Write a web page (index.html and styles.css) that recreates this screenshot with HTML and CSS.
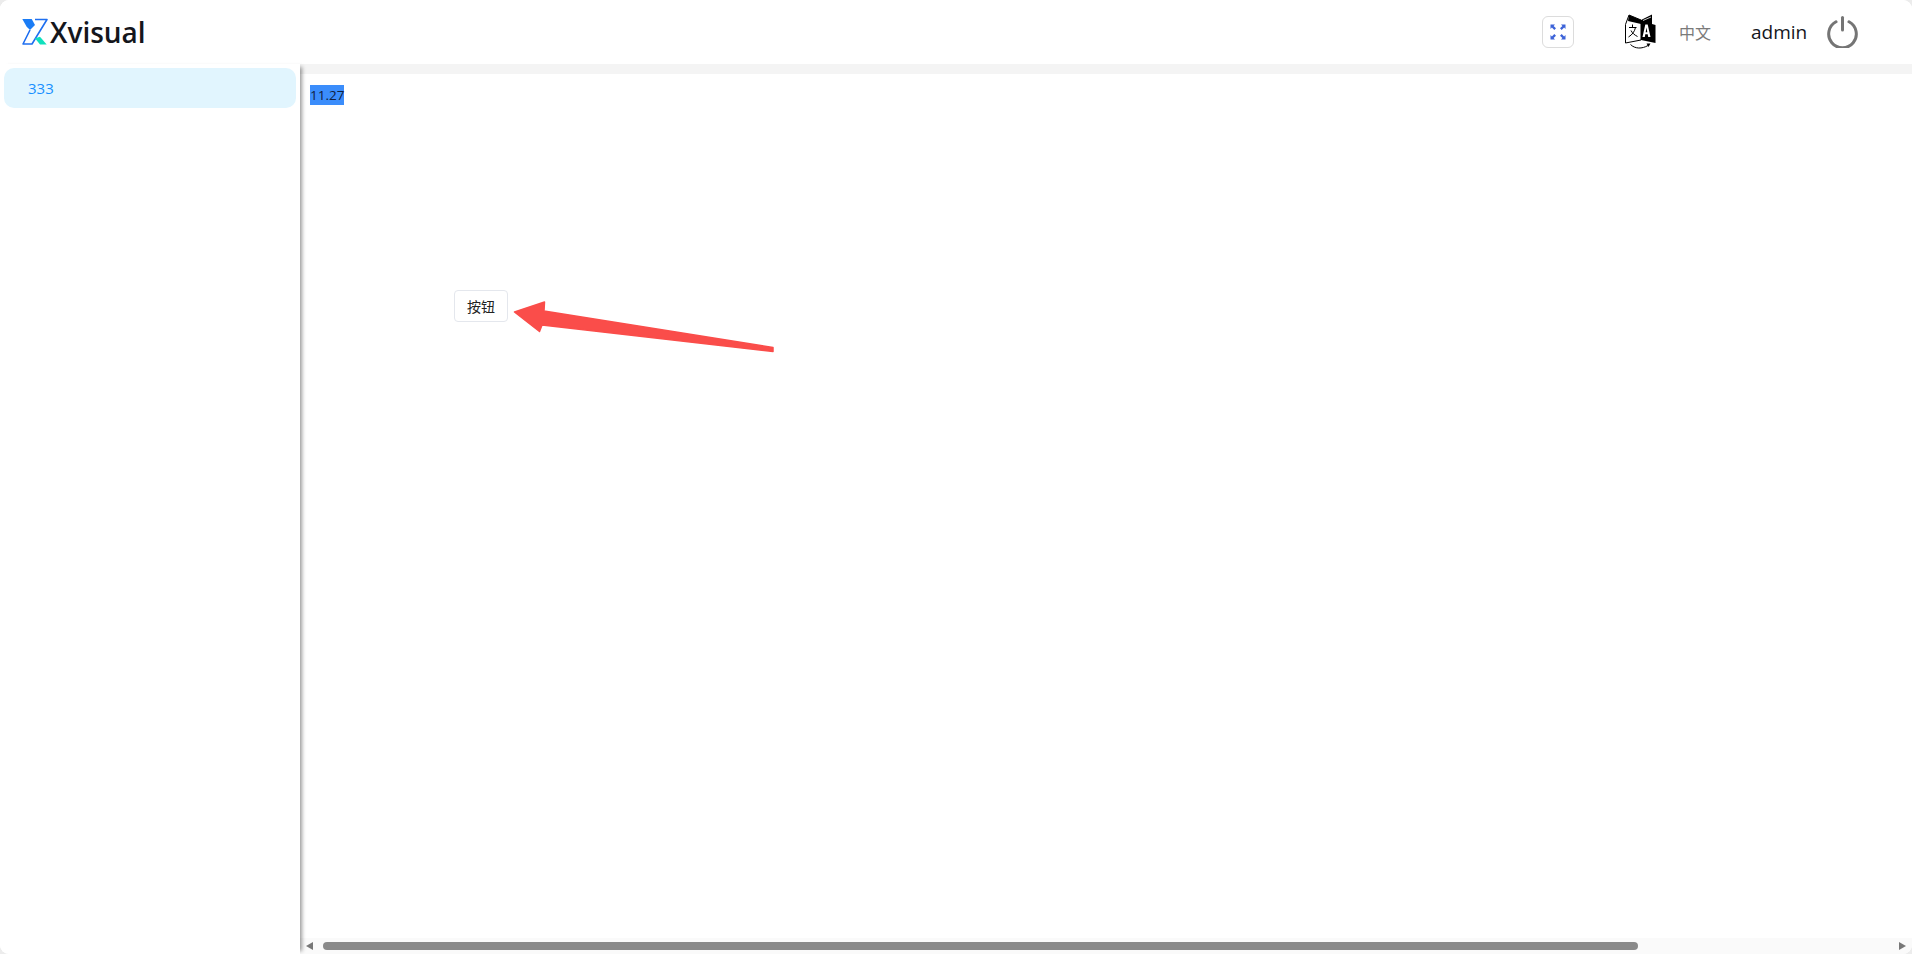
FILE: index.html
```html
<!DOCTYPE html>
<html lang="zh">
<head>
<meta charset="utf-8">
<title>Xvisual</title>
<link rel="stylesheet" href="styles.css">
</head>
<body>
<div class="app">
  <header class="header">
    <div class="brand">
      <svg class="logo" viewBox="0 0 28 28" width="28" height="28" aria-hidden="true">
        <path d="M0.3 1H9.7L13 7L8 12L4.7 8.7Z" fill="#1a7cf5"/>
        <path d="M13 1.5H25L10 26H1L8 12" fill="none" stroke="#1f6ff0" stroke-width="1.6" stroke-linejoin="round"/>
        <path d="M13 20.3L18 18.7L24.7 26.6H18Z" fill="#0fe0bd"/>
      </svg>
      <span class="brand-name">Xvisual</span>
    </div>
    <div class="tools">
      <button class="fullscreen" aria-label="全屏">
        <svg viewBox="0 0 16 16" width="16" height="16" aria-hidden="true">
          <g fill="#3d63d8">
            <path d="M0.5 0.5H5L3.6 1.9L6 4.3L4.3 6L1.9 3.6L0.5 5Z"/>
            <path d="M15.5 0.5H11L12.4 1.9L10 4.3L11.7 6L14.1 3.6L15.5 5Z"/>
            <path d="M0.5 15.5H5L3.6 14.1L6 11.7L4.3 10L1.9 12.4L0.5 11Z"/>
            <path d="M15.5 15.5H11L12.4 14.1L10 11.7L11.7 10L14.1 12.4L15.5 11Z"/>
          </g>
        </svg>
      </button>
      <svg class="lang-icon" viewBox="0 0 32 36" width="32" height="36" aria-hidden="true">
        <path d="M0.5 10.5L4 1L16 6V26L0.5 29Z" fill="#fff" stroke="#000" stroke-width="1"/>
        <path d="M4 1L16 6V10L3 7Z" fill="#000"/>
        <path d="M16 6L27 0.5V10L30.5 11V29L16 26Z" fill="#000"/>
        <path d="M18 6.5L26 3" stroke="#fff" stroke-width="0.8"/>
        <path d="M4 13.5H11.5M7.5 10.5V13M10.5 13.5C9.5 17.5 7.5 20.5 3.5 23M6 16.5C7.2 19 9.5 21 12.5 22.5" fill="none" stroke="#000" stroke-width="1"/>
        <path d="M17.5 23L20.3 10.5H22.7L25.5 23H23.2L22.7 20.2H20.3L19.8 23ZM20.7 18.2H22.3L21.5 13.5Z" fill="#fff"/>
        <path d="M5.5 30.5C10 35 17 35 23 31.5" fill="none" stroke="#000" stroke-width="1"/>
        <path d="M21.5 29.5L25.5 29.5L23.5 33Z" fill="#000"/>
      </svg>
      <span class="lang-text">中文</span>
      <span class="user">admin</span>
      <svg class="power" viewBox="0 0 32 32" width="32" height="32" aria-hidden="true">
        <path d="M9 5.8A13.8 13.8 0 1 0 22 5.8" fill="none" stroke="#757575" stroke-width="3" stroke-linecap="round"/>
        <path d="M15.5 1.5V14" fill="none" stroke="#757575" stroke-width="3" stroke-linecap="round"/>
      </svg>
    </div>
  </header>
  <div class="body">
    <aside class="sidebar">
      <div class="menu-item">333</div>
    </aside>
    <main class="main">
      <div class="strip"></div>
      <div class="content">
        <div class="note"><span class="selected">11.27</span></div>
        <button class="btn">按钮</button>
        <svg class="arrow" viewBox="0 0 270 62" width="270" height="62" aria-hidden="true">
          <path d="M7.5 20L37.5 10L37 19L266 55.5V59.5L35 33L32.5 39.5Z" fill="#fa4d4a" stroke="#fa4d4a" stroke-width="1.5" stroke-linejoin="round"/>
        </svg>
      </div>
      <div class="scrollbar">
        <span class="arrow-left"></span>
        <div class="track"><div class="thumb"></div></div>
        <span class="arrow-right"></span>
      </div>
    </main>
  </div>
</div>
</body>
</html>
```
FILE: styles.css
```css
* { box-sizing: border-box; }
html, body { margin: 0; height: 100%; background: #ececec; overflow: hidden; }
body { font-family: "Noto Sans CJK SC", "Open Sans", sans-serif; }
.app {
  width: 1912px; height: 954px; background: #fff; border-radius: 9px; overflow: hidden;
  display: flex; flex-direction: column;
}
.header { height: 64px; flex: none; display: flex; align-items: center; justify-content: space-between; background: #fff; }
.brand { display: flex; align-items: center; padding-left: 22px; }
.logo { flex: none; }
.brand-name { font-family: "Open Sans", sans-serif; font-size: 28px; font-weight: 600; color: #14161c; line-height: 32px; }
.tools { display: flex; align-items: center; padding-right: 53px; }
.fullscreen {
  width: 32px; height: 32px; padding: 0; background: #fff; border: 1px solid #dcdcdc; border-radius: 6px;
  display: flex; align-items: center; justify-content: center; margin-right: 51px;
}
.lang-icon { flex: none; margin-right: 22px; }
.lang-text { font-size: 16px; line-height: 20px; color: #7a7a7a; width: 32px; margin-right: 40px; }
.user { font-family: "Open Sans", sans-serif; font-size: 19px; line-height: 24px; color: #14161c; width: 57px; margin-right: 19px; }
.power { flex: none; }
.body { flex: 1; display: flex; min-height: 0; }
.sidebar {
  width: 300px; flex: none; background: #fff; padding: 4px; position: relative;
  box-shadow: 5px 0 4px -3px rgba(0,0,0,.4);
  z-index: 1;
}
.menu-item {
  height: 40px; width: 292px; background: #e1f5fe; border-radius: 10px; color: #1890ff;
  font-family: "Open Sans", sans-serif; font-size: 15px; line-height: 40px; padding-left: 24px;
}
.main { flex: 1; min-width: 0; display: flex; flex-direction: column; }
.strip { height: 10px; background: #f4f4f4; flex: none; }
.content { flex: 1; position: relative; padding: 11px 10px; }
.note { font-family: "Open Sans", sans-serif; font-size: 13.5px; line-height: 20px; color: #14161c; }
.selected { display: inline-block; background: #3b8dfb; color: #102040; }
.btn {
  position: absolute; left: 154px; top: 216px; width: 54px; height: 32px; background: #fff;
  border: 1px solid #e4e7ed; border-radius: 4px; font: 14px/20px "Noto Sans CJK SC", sans-serif; color: #222; padding: 0;
}
.arrow { position: absolute; left: 207px; top: 218px; overflow: visible; }
.scrollbar { height: 16px; flex: none; background: #fafafa; display: flex; align-items: center; }
.track { flex: 1; height: 8px; margin: 0 2px 0 10px; }
.thumb { width: 1315px; height: 8px; background: #8a8a8a; border-radius: 4px; }
.arrow-left { width: 0; height: 0; margin-left: 6px; border: 4px solid transparent; border-left-width: 0; border-right: 7px solid #777; }
.arrow-right { width: 0; height: 0; margin-right: 6px; border: 4px solid transparent; border-right-width: 0; border-left: 7px solid #777; }
```
